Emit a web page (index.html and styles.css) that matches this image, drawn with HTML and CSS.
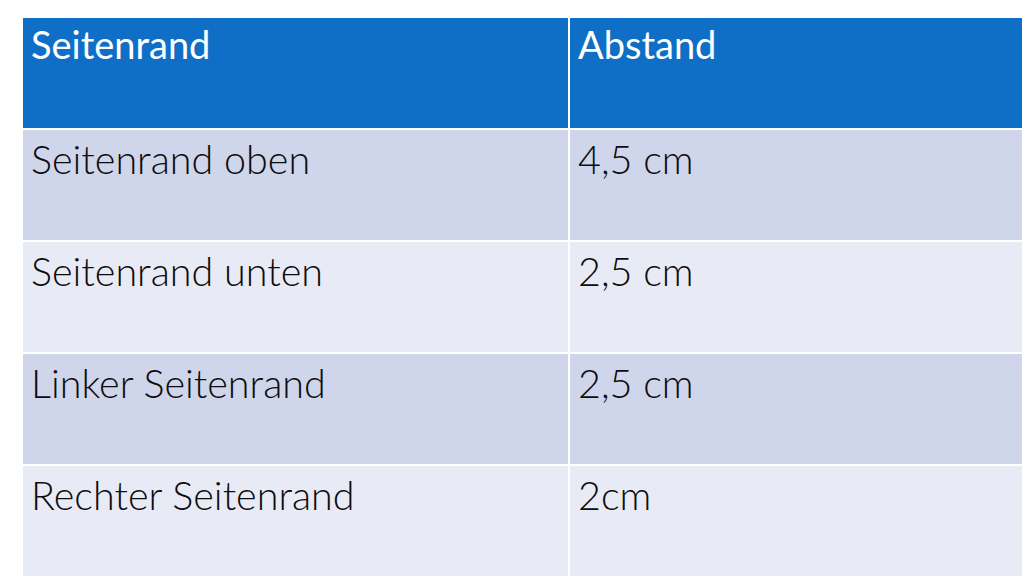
FILE: index.html
```html
<!DOCTYPE html>
<html lang="de">
<head>
<meta charset="utf-8">
<title>Seitenrand</title>
<link rel="stylesheet" href="styles.css">
</head>
<body>
<div class="page">
  <div class="table">
    <div class="cell head">Seitenrand</div>
    <div class="cell head">Abstand</div>
    <div class="cell odd">Seitenrand oben</div>
    <div class="cell odd">4,5 cm</div>
    <div class="cell even">Seitenrand unten</div>
    <div class="cell even">2,5 cm</div>
    <div class="cell odd">Linker Seitenrand</div>
    <div class="cell odd">2,5 cm</div>
    <div class="cell even">Rechter Seitenrand</div>
    <div class="cell even">2cm</div>
  </div>
</div>
</body>
</html>
```

FILE: styles.css
```css
html, body {
  margin: 0;
  padding: 0;
  background: #ffffff;
}
.page {
  width: 1024px;
  height: 576px;
  overflow: hidden;
  padding: 18px 0 0 23px;
  box-sizing: border-box;
}
.table {
  display: grid;
  grid-template-columns: 545px 452px;
  grid-auto-rows: 110px;
  gap: 2px;
  background: #ffffff;
}
.cell {
  font-family: Lato, "Open Sans", sans-serif;
  font-size: 39.5px;
  line-height: 1.2;
  font-weight: 300;
  color: #0d0d0d;
  padding: 5px 8px 0 8px;
}
.head {
  background: #0f6fc6;
  color: #ffffff;
  font-weight: 400;
  font-size: 38px;
  padding-top: 4px;
}
.odd {
  background: #cfd5ea;
}
.even {
  background: #e8ebf5;
}
```
